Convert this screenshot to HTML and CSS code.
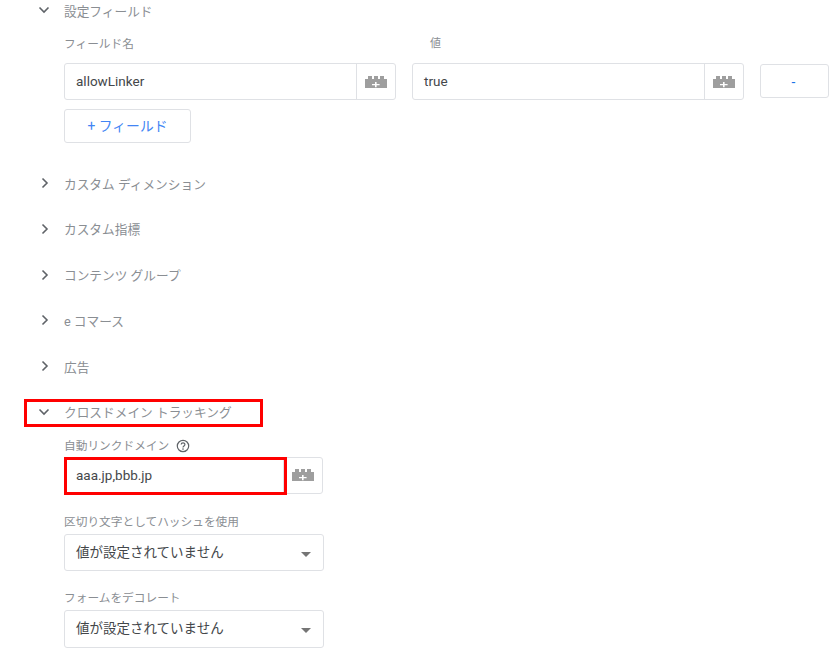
FILE: index.html
```html
<!DOCTYPE html>
<html lang="ja">
<head>
<meta charset="utf-8">
<title>クロスドメイン トラッキング</title>
<link rel="stylesheet" href="styles.css">
</head>
<body>
<svg class="defs" width="0" height="0" aria-hidden="true">
  <symbol id="brick" viewBox="0 0 22 12">
    <path fill="#9e9e9e" fill-rule="evenodd" d="M0 3h3V0h4v3h2V0h4v3h2V0h4v3h3v9H0zM10 6v2H7v1.2h3v2h1.6v-2h3V8h-3V6z"/>
  </symbol>
  <symbol id="down" viewBox="0 0 12 8">
    <path fill="none" stroke="#5f6368" stroke-width="1.6" d="M1.5 1.5 6 6l4.5-4.5"/>
  </symbol>
  <symbol id="right" viewBox="0 0 8 12">
    <path fill="none" stroke="#5f6368" stroke-width="1.6" d="M1.5 1.5 6 6l-4.5 4.5"/>
  </symbol>
</svg>
<main class="page">
  <section class="section first">
    <div class="head"><svg class="chev-d"><use href="#down"/></svg><span>設定フィールド</span></div>
    <div class="body">
      <div class="fields">
        <div class="col">
          <div class="label">フィールド名</div>
          <div class="input wide"><span class="val">allowLinker</span><span class="addon"><svg class="brick"><use href="#brick"/></svg></span></div>
        </div>
        <div class="col">
          <div class="label indent">値</div>
          <div class="input wide"><span class="val">true</span><span class="addon"><svg class="brick"><use href="#brick"/></svg></span></div>
        </div>
        <button class="btn minus">-</button>
      </div>
      <button class="btn add">+ フィールド</button>
    </div>
  </section>
  <section class="section"><div class="head"><svg class="chev-r"><use href="#right"/></svg><span>カスタム ディメンション</span></div></section>
  <section class="section"><div class="head"><svg class="chev-r"><use href="#right"/></svg><span>カスタム指標</span></div></section>
  <section class="section"><div class="head"><svg class="chev-r"><use href="#right"/></svg><span>コンテンツ グループ</span></div></section>
  <section class="section"><div class="head"><svg class="chev-r"><use href="#right"/></svg><span>e コマース</span></div></section>
  <section class="section"><div class="head"><svg class="chev-r"><use href="#right"/></svg><span>広告</span></div></section>
  <section class="section">
    <div class="head marked"><svg class="chev-d"><use href="#down"/></svg><span>クロスドメイン トラッキング</span><i class="mark mark-head"></i></div>
    <div class="body">
      <div class="label help">自動リンクドメイン
        <svg class="q" viewBox="0 0 14 14"><circle cx="7" cy="7" r="5.7" fill="none" stroke="#5f6368" stroke-width="1.2"/><path fill="none" stroke="#5f6368" stroke-width="1.2" d="M5.2 5.6c0-2.3 3.7-2.3 3.7-.1 0 1.4-1.9 1.5-1.9 3"/><circle cx="7" cy="10.1" r=".8" fill="#5f6368"/></svg>
      </div>
      <div class="input addon-narrow marked"><span class="val">aaa.jp,bbb.jp</span><span class="addon"><svg class="brick"><use href="#brick"/></svg></span><i class="mark mark-input"></i></div>
      <div class="label gap">区切り文字としてハッシュを使用</div>
      <div class="input narrow select"><span class="val">値が設定されていません</span><i class="caret"></i></div>
      <div class="label gap2">フォームをデコレート</div>
      <div class="input narrow select last"><span class="val">値が設定されていません</span><i class="caret"></i></div>
    </div>
  </section>
</main>
</body>
</html>
```
FILE: styles.css
```css
* { box-sizing: border-box; }
html, body { margin: 0; padding: 0; background: #fff; }
body {
  width: 840px;
  height: 657px;
  overflow: hidden;
  font-family: Roboto, "Noto Sans CJK JP", sans-serif;
  color: #3c4043;
}
.defs { position: absolute; }
.page { display: flex; flex-direction: column; }
.section { margin-bottom: 25.8px; }
.section.first { margin-bottom: 30px; }
.head {
  display: flex;
  align-items: center;
  height: 20px;
  font-size: 12.7px;
  color: #8a8e93;
}
.chev-d { width: 12px; height: 8px; margin-left: 38px; margin-right: 14px; }
.chev-r { width: 8px; height: 12px; margin-left: 41px; margin-right: 15px; }
.body { padding-left: 64px; }
.fields { display: flex; align-items: flex-start; gap: 16px; margin-top: 16px; }
.label { font-size: 11.7px; line-height: 16px; color: #8a8e93; }
.indent { padding-left: 18px; font-size: 11px; }
.col .label { margin-bottom: 11px; }
.input {
  display: flex;
  align-items: stretch;
  height: 37px;
  border: 1px solid #dfe1e5;
  border-radius: 3px;
  background: #fff;
  font-size: 13.5px;
  color: #44474a;
}
.wide { width: 332px; }
.narrow { width: 260px; }
.addon-narrow { width: 259px; }
.val { flex: 1; padding-left: 11px; line-height: 34px; }
.addon {
  display: flex;
  align-items: center;
  justify-content: center;
  width: 39px;
  border-left: 1px solid #dfe1e5;
}
.brick { width: 22px; height: 12px; }
.btn {
  display: block;
  border: 1px solid #dfe1e5;
  border-radius: 3px;
  background: #fff;
  color: #4285f4;
  font-family: inherit;
  font-size: 13.8px;
  padding: 0;
}
.minus { width: 69px; height: 34px; margin-top: 28px; padding: 2px 2px 0 0; color: #1a73e8; }
.add { width: 127px; height: 34px; margin-top: 9px; padding-bottom: 2px; }
.help { display: flex; align-items: center; gap: 7px; margin-top: 16px; margin-bottom: 3px; }
.q { width: 14px; height: 14px; }
.gap { margin-top: 20px; margin-bottom: 4px; }
.gap2 { margin-top: 19px; margin-bottom: 4px; }
.last { height: 38px; }
.marked { position: relative; }
.mark { position: absolute; border: 3px solid #f00; pointer-events: none; }
.mark-head { left: 24px; top: -3px; width: 239px; height: 28px; }
.mark-input { left: -1px; top: -1px; width: 223px; height: 38px; }
.select { position: relative; }
.caret {
  position: absolute;
  right: 12px;
  top: 17px;
  border-left: 5px solid transparent;
  border-right: 5px solid transparent;
  border-top: 5px solid #757575;
}
```
